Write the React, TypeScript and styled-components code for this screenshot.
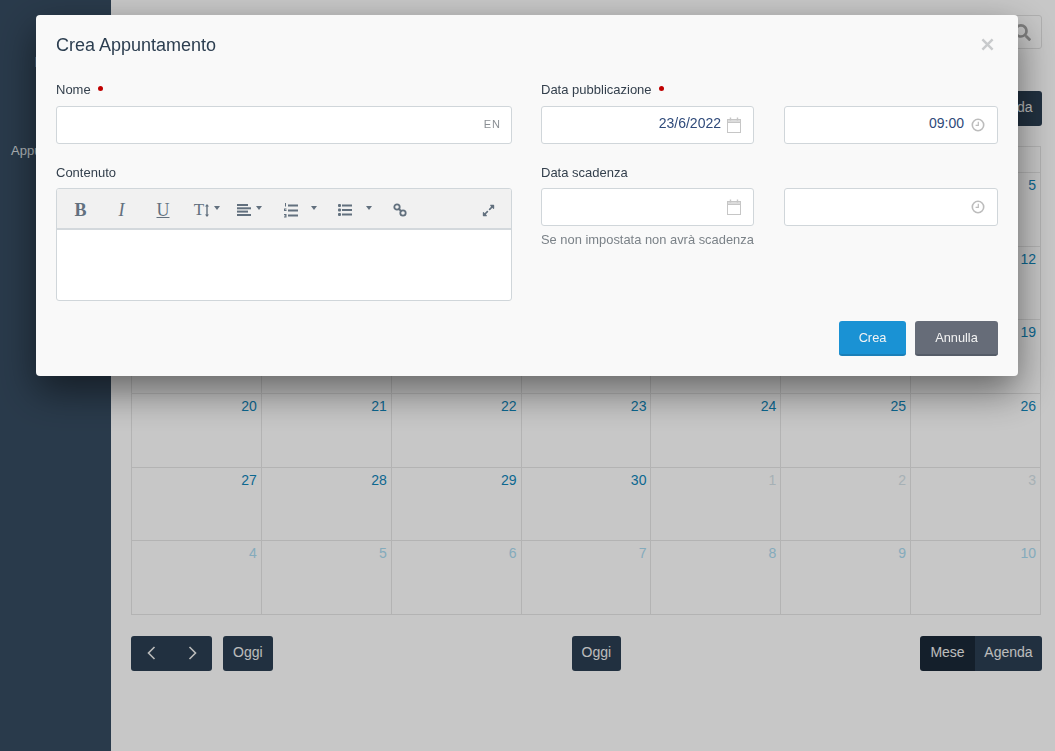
import React from "react";
import styled, { createGlobalStyle } from "styled-components";
import { FaExpandAlt, FaSearch } from "react-icons/fa";

const GlobalStyle = createGlobalStyle`
  html, body {
    margin: 0;
    height: 100%;
    background: #f9f9f9;
    font-family: "Liberation Sans", Arial, sans-serif;
    color: #34495e;
    overflow: hidden;
  }
  * {
    box-sizing: border-box;
  }
`;

const Page = styled.div`
  display: flex;
  height: 751px;
`;

const Sidebar = styled.aside`
  width: 111px;
  flex: none;
  background: #34495e;
  color: #dde1e5;
  padding: 57px 0 0 11px;
  font-size: 13px;
  line-height: 15px;
  overflow: hidden;
`;

const SideLogo = styled.div`
  width: 2px;
  height: 10px;
  margin: 0 0 76px 24px;
  background: #5c7f9e;
`;

const Main = styled.main`
  flex: 1;
  min-width: 0;
  padding: 15px 13px 0 20px;
`;

const SearchRow = styled.div`
  display: flex;
  justify-content: flex-end;
  height: 34px;
  margin-bottom: 42px;
`;

const SearchBox = styled.div`
  width: 160px;
  border: 1px solid #dcdcdc;
  border-radius: 3px;
  display: flex;
  align-items: center;
  justify-content: flex-end;
  padding-right: 10px;
  color: #a0a0a0;
  font-size: 17px;
`;

const TopBar = styled.div`
  display: flex;
  justify-content: flex-end;
  margin-bottom: 20px;
`;

const Group = styled.div`
  display: flex;
  border-radius: 3px;
  overflow: hidden;
`;

const DarkButton = styled.button<{ $active?: boolean; $w?: number }>`
  height: 35px;
  width: ${(p) => (p.$w ? `${p.$w}px` : "auto")};
  padding: ${(p) => (p.$w ? "0" : "0 10px")};
  border: 0;
  background: ${(p) => (p.$active ? "#1a2736" : "#2a3d50")};
  color: #ebebeb;
  font: 14px "Liberation Sans", Arial, sans-serif;
  display: flex;
  align-items: center;
  justify-content: center;
  padding-bottom: 3px;
`;

const SingleButton = styled(DarkButton)`
  border-radius: 3px;
`;

const Calendar = styled.div`
  display: grid;
  grid-template-columns: repeat(7, 1fr);
  margin-right: 1px;
  border-top: 1px solid #e0e0e0;
  border-left: 1px solid #e0e0e0;
`;

const HeadCell = styled.div`
  height: 26px;
  border-right: 1px solid #e0e0e0;
  border-bottom: 1px solid #e0e0e0;
  text-align: center;
  font-size: 13px;
  font-weight: bold;
  line-height: 25px;
`;

const DayCell = styled.div<{ $tone: "current" | "blue" | "grey" }>`
  height: 73.67px;
  border-right: 1px solid #e0e0e0;
  border-bottom: 1px solid #e0e0e0;
  padding: 4px 4px 0 0;
  text-align: right;
  font-size: 14px;
  line-height: 16px;
  color: ${(p) =>
    p.$tone === "current" ? "#0f82b5" : p.$tone === "blue" ? "#a6d6ec" : "#d0dde3"};
`;

const BottomBar = styled.div`
  display: flex;
  justify-content: space-between;
  margin-top: 21px;
`;

const BarSide = styled.div`
  display: flex;
  gap: 11px;
`;

const ChevronSvg = styled.svg`
  margin-top: 3px;
`;

const Overlay = styled.div`
  position: fixed;
  inset: 0;
  background: rgba(0, 0, 0, 0.2);
  padding: 15px 37px 0 36px;
`;

const Modal = styled.div`
  height: 361px;
  background: #f9f9f9;
  border-radius: 4px;
  padding: 20px 20px 0;
  box-shadow: 0 15px 38px rgba(0, 0, 0, 0.5);
  display: flex;
  flex-direction: column;
`;

const ModalHead = styled.div`
  display: flex;
  justify-content: space-between;
  align-items: center;
  height: 21px;
  margin-bottom: 26px;
`;

const Title = styled.h2`
  margin: 0;
  font-size: 18px;
  font-weight: normal;
  color: #2c3e50;
`;

const CloseIcon = styled.svg`
  width: 13px;
  height: 13px;
  margin: -2px 4px 0 0;
  stroke: #c8cacc;
  stroke-width: 2.6;
  display: block;
`;

const Columns = styled.div`
  display: grid;
  grid-template-columns: 1fr 1fr;
  column-gap: 29px;
`;

const Column = styled.div`
  display: flex;
  flex-direction: column;
`;

const Label = styled.label<{ $mb: number }>`
  display: block;
  height: 16px;
  line-height: 16px;
  font-size: 13px;
  color: #34404d;
  margin-bottom: ${(p) => p.$mb}px;
`;

const Required = styled.span`
  display: inline-block;
  width: 5px;
  height: 5px;
  border-radius: 50%;
  background: #c00000;
  margin-left: 7px;
  vertical-align: 3px;
`;

const Field = styled.div<{ $gap?: number }>`
  height: 38px;
  background: #fff;
  border: 1px solid #d0d6da;
  border-radius: 3px;
  display: flex;
  align-items: center;
  justify-content: flex-end;
  padding: 0 12px 0 0;
  gap: ${(p) => p.$gap ?? 6}px;
`;

const FieldText = styled.span`
  font-size: 14px;
  color: #2f4a7a;
  margin-top: -4px;
`;

const LangTag = styled.span`
  font-size: 11px;
  letter-spacing: 1px;
  color: #8a8f94;
  margin: -3px -2px 0 0;
`;

const FieldBlock = styled.div`
  margin-bottom: 21px;
`;

const Pair = styled.div`
  display: grid;
  grid-template-columns: 213px 214px;
  column-gap: 30px;
`;

const Hint = styled.div`
  font-size: 12.9px;
  color: #7b8288;
  margin-top: 6px;
  white-space: nowrap;
`;

const Editor = styled.div`
  height: 113px;
  background: #fff;
  border: 1px solid #d0d6da;
  border-radius: 3px;
  overflow: hidden;
`;

const EditorBar = styled.div`
  height: 41px;
  background: #f1f1f1;
  border-bottom: 2px solid #d3d8dc;
  display: flex;
  align-items: center;
  padding: 3px 2px 0 3px;
  color: #62707e;
`;

const ToolButton = styled.div<{ $w: number; $gap?: number; $push?: boolean }>`
  width: ${(p) => p.$w}px;
  height: 100%;
  flex: none;
  display: flex;
  align-items: center;
  justify-content: center;
  gap: ${(p) => p.$gap ?? 5}px;
  font-size: 13px;
  margin-left: ${(p) => (p.$push ? "auto" : "0")};
`;

const Glyph = styled.span<{ $bold?: boolean; $italic?: boolean; $under?: boolean; $size?: number }>`
  font-family: "Liberation Serif", "Times New Roman", serif;
  font-size: ${(p) => p.$size ?? 18}px;
  line-height: 18px;
  font-weight: ${(p) => (p.$bold ? "bold" : "normal")};
  font-style: ${(p) => (p.$italic ? "italic" : "normal")};
  text-decoration: ${(p) => (p.$under ? "underline" : "none")};
`;

const SizeGlyph = styled.span`
  display: flex;
  align-items: center;
  gap: 1px;
`;

const Caret = styled.span`
  width: 0;
  height: 0;
  border-left: 3.5px solid transparent;
  border-right: 3.5px solid transparent;
  border-top: 4px solid #62707e;
  margin-top: -5px;
`;

const Footer = styled.div`
  margin-top: auto;
  padding-bottom: 20px;
  display: flex;
  justify-content: flex-end;
  gap: 9px;
`;

const ModalButton = styled.button<{ $primary?: boolean }>`
  height: 35px;
  width: ${(p) => (p.$primary ? 67 : 83)}px;
  padding: 0;
  border: 0;
  border-bottom: 2px solid ${(p) => (p.$primary ? "#1a7fb8" : "#555c68")};
  border-radius: 3px;
  background: ${(p) => (p.$primary ? "#1a92d4" : "#666c78")};
  color: #f4f4f4;
  font: 12.8px "Liberation Sans", Arial, sans-serif;
`;

const CalendarIcon = () => (
  <svg width="14" height="16" viewBox="0 0 14 16" fill="none">
    <rect x="0.5" y="2.5" width="13" height="13" fill="#fff" stroke="#c6c6c6" />
    <rect x="0.5" y="2.5" width="13" height="3" fill="#dcdcdc" stroke="#c6c6c6" />
    <path d="M3.5 0.5v3M10.5 0.5v3" stroke="#c6c6c6" strokeWidth="1.4" />
  </svg>
);

const ClockIcon = () => (
  <svg width="14" height="14" viewBox="0 0 14 14" fill="none">
    <circle cx="7" cy="7" r="5.7" stroke="#bcbcbc" strokeWidth="1.6" />
    <path d="M7.3 3.8v3.6H4.6" stroke="#bcbcbc" strokeWidth="1.2" />
  </svg>
);

const LinkIcon = () => (
  <svg width="14" height="14" viewBox="0 0 14 14" fill="none">
    <circle cx="4" cy="4" r="2.7" stroke="#62707e" strokeWidth="1.8" />
    <circle cx="10" cy="10" r="2.7" stroke="#62707e" strokeWidth="1.8" />
    <path d="M5.5 5.5l3 3" stroke="#62707e" strokeWidth="1.8" />
  </svg>
);

const HeightIcon = () => (
  <svg width="4" height="13" viewBox="0 0 4 13" fill="#62707e">
    <path d="M2 0L4 2.5H2.7v8H4L2 13 0 10.5h1.3v-8H0z" />
  </svg>
);

const AlignIcon = () => (
  <svg width="14" height="12" viewBox="0 0 14 12" fill="#62707e">
    <rect y="0" width="11" height="2" />
    <rect y="3.3" width="14" height="2" />
    <rect y="6.6" width="11" height="2" />
    <rect y="10" width="14" height="2" />
  </svg>
);

const OrderedIcon = () => (
  <svg width="14" height="15" viewBox="0 0 14 15" fill="#62707e">
    <path d="M1 0h1v3.5H1zM0 5.5h2.5v1H1v.6h1.5v1H0zM0 11h2.5v3.5H0v-1h1.5v-.3H.6v-1h.9V12H0z" />
    <rect x="4" y="1.5" width="10" height="2" />
    <rect x="4" y="6.5" width="10" height="2" />
    <rect x="4" y="11.5" width="10" height="2" />
  </svg>
);

const BulletIcon = () => (
  <svg width="14" height="12" viewBox="0 0 14 12" fill="#62707e">
    <rect y="0" width="3" height="3" rx="1" />
    <rect y="4.5" width="3" height="3" rx="1" />
    <rect y="9" width="3" height="3" rx="1" />
    <rect x="4" y="0.5" width="10" height="2" />
    <rect x="4" y="5" width="10" height="2" />
    <rect x="4" y="9.5" width="10" height="2" />
  </svg>
);

const Chevron = ({ d }: { d: string }) => (
  <ChevronSvg width="9" height="14" viewBox="0 0 9 14" fill="none">
    <path d={d} stroke="#ebebeb" strokeWidth="1.6" />
  </ChevronSvg>
);

const weekdays = ["Lun", "Mar", "Mer", "Gio", "Ven", "Sab", "Dom"];

const weeks = [
  [30, 31, 1, 2, 3, 4, 5],
  [6, 7, 8, 9, 10, 11, 12],
  [13, 14, 15, 16, 17, 18, 19],
  [20, 21, 22, 23, 24, 25, 26],
  [27, 28, 29, 30, 1, 2, 3],
  [4, 5, 6, 7, 8, 9, 10],
];

export default function App() {
  return (
    <>
      <GlobalStyle />
      <Page>
        <Sidebar>
          <SideLogo />
          Appuntamenti
        </Sidebar>
        <Main>
          <SearchRow>
            <SearchBox>
              <FaSearch />
            </SearchBox>
          </SearchRow>
          <TopBar>
            <Group>
              <DarkButton $active $w={55}>
                Mese
              </DarkButton>
              <DarkButton $w={67}>Agenda</DarkButton>
            </Group>
          </TopBar>
          <Calendar>
            {weekdays.map((d) => (
              <HeadCell key={d}>{d}</HeadCell>
            ))}
            {weeks.map((week, w) =>
              week.map((day, i) => {
                const tone = w === 4 && i > 3 ? "grey" : w === 5 || (w === 0 && i < 2) ? "blue" : "current";
                return (
                  <DayCell key={`${w}-${i}`} $tone={tone}>
                    {day}
                  </DayCell>
                );
              })
            )}
          </Calendar>
          <BottomBar>
            <BarSide>
              <Group>
                <DarkButton $w={41}>
                  <Chevron d="M7.5 1L1.5 7l6 6" />
                </DarkButton>
                <DarkButton $w={40}>
                  <Chevron d="M1.5 1l6 6-6 6" />
                </DarkButton>
              </Group>
              <SingleButton>Oggi</SingleButton>
            </BarSide>
            <SingleButton>Oggi</SingleButton>
            <Group>
              <DarkButton $active $w={55}>
                Mese
              </DarkButton>
              <DarkButton $w={67}>Agenda</DarkButton>
            </Group>
          </BottomBar>
        </Main>
      </Page>
      <Overlay>
        <Modal>
          <ModalHead>
            <Title>Crea Appuntamento</Title>
            <CloseIcon viewBox="0 0 14 14">
              <path d="M1.5 1.5l11 11M12.5 1.5l-11 11" />
            </CloseIcon>
          </ModalHead>
          <Columns>
            <Column>
              <FieldBlock>
                <Label $mb={8}>
                  Nome
                  <Required />
                </Label>
                <Field>
                  <LangTag>EN</LangTag>
                </Field>
              </FieldBlock>
              <Label $mb={7}>Contenuto</Label>
              <Editor>
                <EditorBar>
                  <ToolButton $w={41}>
                    <Glyph $bold>B</Glyph>
                  </ToolButton>
                  <ToolButton $w={41}>
                    <Glyph $italic>I</Glyph>
                  </ToolButton>
                  <ToolButton $w={42}>
                    <Glyph $under>U</Glyph>
                  </ToolButton>
                  <ToolButton $w={46}>
                    <SizeGlyph>
                      <Glyph $size={17}>T</Glyph>
                      <HeightIcon />
                    </SizeGlyph>
                    <Caret />
                  </ToolButton>
                  <ToolButton $w={39}>
                    <AlignIcon />
                    <Caret />
                  </ToolButton>
                  <ToolButton $w={62} $gap={13}>
                    <OrderedIcon />
                    <Caret />
                  </ToolButton>
                  <ToolButton $w={48} $gap={14}>
                    <BulletIcon />
                    <Caret />
                  </ToolButton>
                  <ToolButton $w={41}>
                    <LinkIcon />
                  </ToolButton>
                  <ToolButton $w={41} $push>
                    <FaExpandAlt />
                  </ToolButton>
                </EditorBar>
              </Editor>
            </Column>
            <Column>
              <FieldBlock>
                <Label $mb={8}>
                  Data pubblicazione
                  <Required />
                </Label>
                <Pair>
                  <Field>
                    <FieldText>23/6/2022</FieldText>
                    <CalendarIcon />
                  </Field>
                  <Field $gap={7}>
                    <FieldText>09:00</FieldText>
                    <ClockIcon />
                  </Field>
                </Pair>
              </FieldBlock>
              <Label $mb={7}>Data scadenza</Label>
              <Pair>
                <Field>
                  <CalendarIcon />
                </Field>
                <Field>
                  <ClockIcon />
                </Field>
              </Pair>
              <Hint>Se non impostata non avrà scadenza</Hint>
            </Column>
          </Columns>
          <Footer>
            <ModalButton $primary>Crea</ModalButton>
            <ModalButton>Annulla</ModalButton>
          </Footer>
        </Modal>
      </Overlay>
    </>
  );
}
